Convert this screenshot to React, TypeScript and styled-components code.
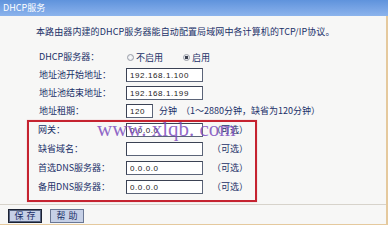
import * as React from "react";
import styled, { createGlobalStyle } from "styled-components";

const GlobalStyle = createGlobalStyle`
  html, body {
    margin: 0;
    padding: 0;
    background: #ffffff;
  }
  body {
    font-family: "Noto Sans CJK SC", "DejaVu Sans", sans-serif;
  }
`;

const Frame = styled.div`
  position: relative;
  width: 388px;
  height: 225px;
  overflow: hidden;
  background: #f7f7f6;
  color: #1a3068;
  font-size: 9px;
`;

const TitleBar = styled.div`
  height: 16px;
  line-height: 16px;
  padding-left: 3px;
  background: linear-gradient(to bottom, #5f93dc, #7aa6e6 60%, #8cb4ec);
  color: #ffffff;
  font-size: 9px;
`;

const Panel = styled.div`
  box-sizing: border-box;
  height: 209px;
  padding-left: 27px;
  border-right: 2px solid #e5c99d;
  border-bottom: 1px solid #e5c99d;
  display: flex;
  flex-direction: column;
`;

const Intro = styled.div`
  margin-top: 10px;
  padding-left: 9px;
  height: 12px;
  line-height: 12px;
  white-space: nowrap;
  letter-spacing: 0.1px;
`;

const Form = styled.div`
  margin-top: 10px;
  padding-left: 12px;
  display: flex;
  flex-direction: column;
`;

const Row = styled.div<{ $h?: number }>`
  display: grid;
  grid-template-columns: 87px auto auto;
  justify-content: start;
  align-items: center;
  height: ${(p) => p.$h ?? 18}px;
  white-space: nowrap;
`;

const Label = styled.span`
  line-height: 12px;
`;

const Field = styled.input<{ $w?: number }>`
  box-sizing: border-box;
  width: ${(p) => p.$w ?? 77}px;
  height: 14px;
  margin: 0;
  padding: 0 0 0 3px;
  border: 1px solid #5b6478;
  border-top-color: #3b4254;
  border-left-color: #3b4254;
  background: #ffffff;
  color: #222222;
  font-family: "Liberation Sans", sans-serif;
  font-size: 8px;
  letter-spacing: 0.6px;
  outline: none;
`;

const Note = styled.span<{ $gap?: number }>`
  margin-left: ${(p) => p.$gap ?? 9}px;
  line-height: 12px;
`;

const Radios = styled.div`
  display: flex;
  align-items: center;
  margin-left: 1px;
`;

const Radio = styled.span<{ $checked?: boolean }>`
  box-sizing: border-box;
  width: 7px;
  height: 7px;
  border-radius: 50%;
  border: 1px solid #9a9ea8;
  background: ${(p) =>
    p.$checked
      ? "radial-gradient(circle, #3c4250 0 1.6px, #e9ebef 2px)"
      : "radial-gradient(circle, #ffffff, #dcdfe6)"};
  margin-right: 2px;
`;

const RadioText = styled.span<{ $space?: number }>`
  margin-right: ${(p) => p.$space ?? 0}px;
`;

const OptionalBox = styled.div`
  box-sizing: border-box;
  width: 230px;
  padding: 0 0 2px 9px;
  border: 2px solid #c52330;
  box-shadow: 0 0 1px rgba(197, 35, 48, 0.4);
  display: flex;
  flex-direction: column;
`;

const BoxRow = styled(Row)`
  grid-template-columns: 88px auto auto;
  align-items: start;
  padding-top: 1px;
  box-sizing: border-box;

  ${Label}, ${Note} {
    margin-top: 1px;
  }
`;

const Separator = styled.div`
  margin: 2px 0 0 -27px;
  height: 1px;
  background: #d7d3cb;
`;

const Footer = styled.div`
  margin-left: -19px;
  padding-top: 4px;
  display: flex;
  gap: 8px;
`;

const Button = styled.button<{ $primary?: boolean }>`
  box-sizing: border-box;
  width: 34px;
  height: 14px;
  margin: 0;
  padding: 0;
  background: #c6d0e6;
  border: 1px solid ${(p) => (p.$primary ? "#1c2233" : "#6a7794")};
  box-shadow: ${(p) => (p.$primary ? "inset 0 0 0 1px #55627f" : "none")};
  color: #1a2e66;
  font-family: "Noto Sans CJK SC", sans-serif;
  font-size: 9px;
  line-height: 12px;
  letter-spacing: 3px;
  text-indent: 3px;
`;

const Watermark = styled.div`
  position: absolute;
  left: 97px;
  top: 119px;
  font-family: "Liberation Serif", serif;
  font-size: 21px;
  line-height: 21px;
  color: rgba(125, 78, 190, 0.85);
  white-space: pre;
  pointer-events: none;
`;

const optional = [
  { label: "网关：", value: "0.0.0.0" },
  { label: "缺省域名：", value: "" },
  { label: "首选DNS服务器：", value: "0.0.0.0" },
  { label: "备用DNS服务器：", value: "0.0.0.0" },
];

export default function App() {
  return (
    <Frame>
      <GlobalStyle />
      <TitleBar>DHCP服务</TitleBar>
      <Panel>
        <Intro>本路由器内建的DHCP服务器能自动配置局域网中各计算机的TCP/IP协议。</Intro>
        <Form>
          <Row>
            <Label>DHCP服务器：</Label>
            <Radios>
              <Radio />
              <RadioText $space={20}>不启用</RadioText>
              <Radio $checked />
              <RadioText>启用</RadioText>
            </Radios>
          </Row>
          <Row>
            <Label>地址池开始地址：</Label>
            <Field readOnly defaultValue="192.168.1.100" />
          </Row>
          <Row>
            <Label>地址池结束地址：</Label>
            <Field readOnly defaultValue="192.168.1.199" />
          </Row>
          <Row>
            <Label>地址租期：</Label>
            <Field $w={27} readOnly defaultValue="120" />
            <Note $gap={6}>分钟&nbsp;&nbsp;（1～2880分钟，缺省为120分钟）</Note>
          </Row>
        </Form>
        <OptionalBox>
          {optional.map((item) => (
            <BoxRow key={item.label} $h={19}>
              <Label>{item.label}</Label>
              <Field readOnly defaultValue={item.value} />
              <Note>（可选）</Note>
            </BoxRow>
          ))}
        </OptionalBox>
        <Separator />
        <Footer>
          <Button $primary>保存</Button>
          <Button>帮助</Button>
        </Footer>
      </Panel>
      <Watermark>www. xlqb. com</Watermark>
    </Frame>
  );
}
